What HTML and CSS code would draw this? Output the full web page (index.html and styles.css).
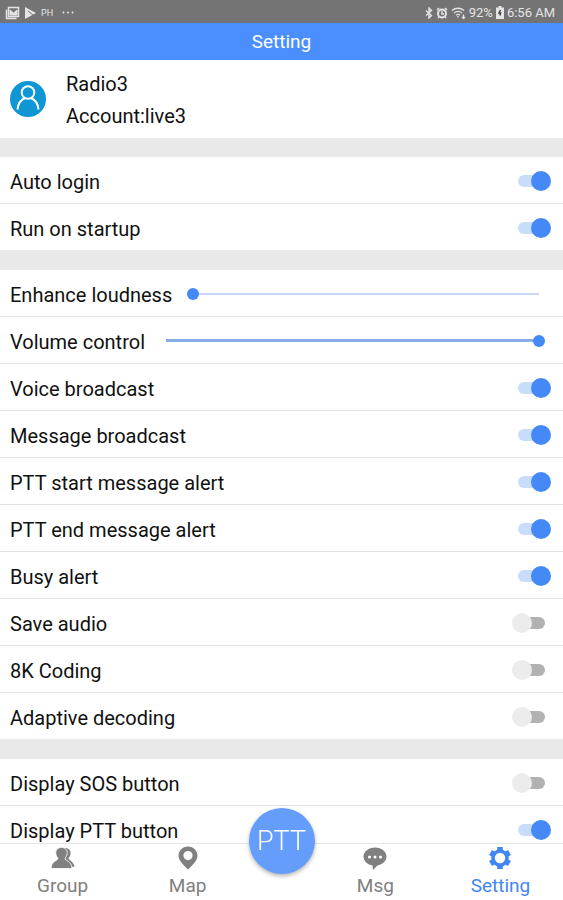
FILE: index.html
```html
<!DOCTYPE html>
<html lang="en">
<head>
    <meta charset="UTF-8">
    <meta name="viewport" content="width=device-width, initial-scale=1.0">
    <title>Setting</title>
    <link rel="stylesheet" href="styles.css">
</head>
<body>
    <div class="status-bar">
        <div class="status-group">
            <svg width="15" height="14" viewBox="0 0 15 14" fill="none" stroke="currentColor">
                <path d="M3.500 1.500h10v9h-10z M1.500 3.500v9h10" stroke-width="1.500"/>
                <path d="M5 9V4l3.500 3L12 4v5z" fill="currentColor"/>
            </svg>
            <svg width="11" height="12" viewBox="0 0 11 12" fill="currentColor">
                <path d="M0 0l11 6-11 6z"/>
                <path d="M3 4l5 4" stroke="#747474"/>
            </svg>
            <span class="status-tag">PH</span>
            <svg class="more" width="12" height="3" viewBox="0 0 12 3" fill="currentColor">
                <circle cx="1.500" cy="1.500" r="1"/><circle cx="6" cy="1.500" r="1"/><circle cx="10.500" cy="1.500" r="1"/>
            </svg>
        </div>
        <div class="status-group status-right">
            <svg width="8" height="12" viewBox="0 0 8 12" fill="none" stroke="currentColor" stroke-width="1.400">
                <path d="M1 3.500l5.500 5L4 11V1l2.500 2.500L1 8.500"/>
            </svg>
            <svg width="12" height="12" viewBox="0 0 12 12" fill="none" stroke="currentColor">
                <circle cx="6" cy="6.500" r="4" stroke-width="2"/>
                <path d="M6 4v3h2M1 3l2-2M11 3L9 1M2 11l1-1M10 11l-1-1" stroke-width="1.500"/>
            </svg>
            <svg width="15" height="12" viewBox="0 0 15 12" fill="none" stroke="currentColor" stroke-width="1.300">
                <path d="M1 3.500c3.500-3 8.500-3 12 0M3 6c2.500-2 5.500-2 8 0M5 8c1.500-1 2.500-1 4 0"/>
                <path d="M7 10.500V9M12.500 7.500v4M11 10l1.500 1.500L14 10"/>
            </svg>
            <span>92%</span>
            <svg width="8" height="13" viewBox="0 0 8 13">
                <path d="M2.500 0h3v1.500H8V13H0V1.500h2.500z" fill="currentColor"/>
                <path d="M4.500 4L3 7h1.500L4 9.500" fill="none" stroke="#444" stroke-width="1.500"/>
            </svg>
            <span>6:56 AM</span>
        </div>
    </div>

    <header>
        <h1>Setting</h1>
    </header>

    <main>
        <section class="profile">
            <svg class="avatar" viewBox="0 0 36 36" fill="none" stroke="#fff" stroke-width="2">
                <circle cx="18" cy="18" r="18" fill="#0f96d4" stroke="none"/>
                <circle cx="18" cy="11.500" r="6.300"/>
                <path d="M7.500 28.500c.5-6.500 3-9.500 7.500-11.500M28.500 28.500c-.5-6.500-3-9.500-7.500-11.500"/>
            </svg>
            <div class="profile-text">
                <div>Radio3</div>
                <div>Account:live3</div>
            </div>
        </section>

        <section class="settings">
            <div class="row">
                <label for="autoLogin">Auto login</label>
                <input type="checkbox" class="switch" id="autoLogin" checked>
            </div>
            <div class="row">
                <label for="startup">Run on startup</label>
                <input type="checkbox" class="switch" id="startup" checked>
            </div>
        </section>

        <section class="settings">
            <div class="row">
                <label for="loudness">Enhance loudness</label>
                <input type="range" class="slider" id="loudness" min="0" max="100" value="0">
            </div>
            <div class="row">
                <label for="volume">Volume control</label>
                <input type="range" class="slider slider-full" id="volume" min="0" max="100" value="100">
            </div>
            <div class="row">
                <label for="voice">Voice broadcast</label>
                <input type="checkbox" class="switch" id="voice" checked>
            </div>
            <div class="row">
                <label for="message">Message broadcast</label>
                <input type="checkbox" class="switch" id="message" checked>
            </div>
            <div class="row">
                <label for="pttStart">PTT start message alert</label>
                <input type="checkbox" class="switch" id="pttStart" checked>
            </div>
            <div class="row">
                <label for="pttEnd">PTT end message alert</label>
                <input type="checkbox" class="switch" id="pttEnd" checked>
            </div>
            <div class="row">
                <label for="busy">Busy alert</label>
                <input type="checkbox" class="switch" id="busy" checked>
            </div>
            <div class="row">
                <label for="saveAudio">Save audio</label>
                <input type="checkbox" class="switch" id="saveAudio">
            </div>
            <div class="row">
                <label for="coding">8K Coding</label>
                <input type="checkbox" class="switch" id="coding">
            </div>
            <div class="row">
                <label for="decoding">Adaptive decoding</label>
                <input type="checkbox" class="switch" id="decoding">
            </div>
        </section>

        <section class="settings">
            <div class="row">
                <label for="sosButton">Display SOS button</label>
                <input type="checkbox" class="switch" id="sosButton">
            </div>
            <div class="row">
                <label for="pttButton">Display PTT button</label>
                <input type="checkbox" class="switch" id="pttButton" checked>
            </div>
        </section>
    </main>

    <nav>
        <a href="#group">
            <svg width="24" height="24" viewBox="0 0 24 24" fill="currentColor">
                <path d="M14 2c4 0 6 2.500 5.500 6-.2 2-1 3-2 4 .5 2.500 5.500 4 6 8.500l-2 .5-5-6-3-3z"/>
                <path d="M10.500 1.500c4 0 6 2.500 5.700 6-.2 2-1 3.500-2.200 4.500.3 3.500 6.500 2.500 7 10.500H0c.5-8 6.700-7 7-10.500-1.200-1-2-2.500-2.200-4.500-.3-3.500 1.700-6 5.700-6z" stroke="#fff" stroke-width=".8"/>
            </svg>
            <span>Group</span>
        </a>
        <a href="#map">
            <svg width="24" height="24" viewBox="0 0 24 24" fill="currentColor" fill-rule="evenodd">
                <path d="M12 .5c-5.300 0-9.500 4-9.500 9 0 5 4.500 9 9.500 14 5-5 9.500-9 9.500-14 0-5-4.200-9-9.500-9zM12 5a4.600 4.600 0 1 1 0 9.200A4.600 4.600 0 0 1 12 5z"/>
            </svg>
            <span>Map</span>
        </a>
        <div class="ptt-slot">
            <button type="button" class="ptt">PTT</button>
        </div>
        <a href="#msg">
            <svg width="24" height="24" viewBox="0 0 24 24">
                <path d="M12 1.500c6.500 0 11.500 4 11.500 9 0 4.500-4 8-9 9L10 24l-.5-4.500c-5-.8-9-4.500-9-9 0-5 5-9 11.500-9z" fill="currentColor"/>
                <g fill="#fff"><circle cx="6.500" cy="11" r="1.500"/><circle cx="12" cy="11" r="1.500"/><circle cx="17.500" cy="11" r="1.500"/></g>
            </svg>
            <span>Msg</span>
        </a>
        <a href="#setting" class="active">
            <svg width="24" height="24" viewBox="0 0 24 24" fill="none" stroke="currentColor">
                <circle cx="12" cy="12" r="7" stroke-width="3.600"/>
                <path d="M12 1v3M12 20v3M2.500 6.500l2.600 1.500M18.900 16l2.600 1.500M2.500 17.500L5.100 16M18.900 8l2.600-1.500" stroke-width="5.600"/>
            </svg>
            <span>Setting</span>
        </a>
    </nav>
</body>
</html>
```

FILE: styles.css
```css
* {
    box-sizing: border-box;
}

body {
    display: flex;
    flex-direction: column;
    height: 100vh;
    margin: 0;
    font-family: Roboto, sans-serif;
    font-size: 20px;
    color: #111;
    background-color: #fff;
}

.status-bar {
    display: flex;
    flex-shrink: 0;
    justify-content: space-between;
    align-items: center;
    height: 23px;
    padding: 2px 8px 0 5px;
    background-color: #747474;
    color: #e4e4e4;
    font-size: 13px;
}

.status-group {
    display: flex;
    align-items: center;
    gap: 5px;
}

.status-right {
    gap: 3px;
}

.status-tag {
    font-size: 9px;
}

.more {
    margin-left: 4px;
}

header {
    flex-shrink: 0;
    padding-top: 1px;
    background-color: #4a8eff;
    color: white;
    text-align: center;
}

h1 {
    margin: 0;
    font-size: 19px;
    font-weight: normal;
    line-height: 36px;
}

main {
    flex: 1;
    min-height: 0;
    overflow-y: auto;
    scrollbar-width: none;
    background-color: #e9e9e9;
}

.profile {
    display: flex;
    align-items: center;
    gap: 20px;
    height: 78px;
    padding: 0 10px;
    background-color: #fff;
}

.avatar {
    width: 36px;
    height: 36px;
}

.profile-text {
    padding-top: 2px;
    line-height: 32px;
}

.settings {
    margin-top: 19px;
    background-color: #fff;
}

.row {
    display: flex;
    align-items: center;
    justify-content: space-between;
    gap: 15px;
    height: 47px;
    padding: 1px 12px 0 10px;
    border-bottom: 1px solid #e2e2e2;
}

.row:last-child {
    border-bottom-color: #e9e9e9;
}

.row label {
    padding-top: 2px;
}

.switch {
    appearance: none;
    position: relative;
    width: 39px;
    height: 20px;
    margin: 0;
    cursor: pointer;
}

.switch::before {
    content: "";
    position: absolute;
    top: 4px;
    left: 6px;
    width: 27px;
    height: 12px;
    border-radius: 6px;
    background-color: #b2b2b2;
}

.switch::after {
    content: "";
    position: absolute;
    top: 0;
    left: 0;
    width: 20px;
    height: 20px;
    border-radius: 50%;
    background-color: #ececec;
}

.switch:checked::before {
    background-color: #c8dcfb;
}

.switch:checked::after {
    left: 19px;
    background-color: #4589f7;
}

.slider {
    appearance: none;
    flex: 1;
    min-width: 0;
    height: 12px;
    margin: 0 6px 0 0;
    background: linear-gradient(#c9d8f5, #c9d8f5) center / calc(100% - 12px) 2px no-repeat;
}

.slider-full {
    background: linear-gradient(#87aeea, #87aeea) center / calc(100% - 12px) 3px no-repeat;
}

.slider::-webkit-slider-thumb {
    appearance: none;
    width: 12px;
    height: 12px;
    border-radius: 50%;
    background-color: #4589f7;
}

nav {
    display: flex;
    flex-shrink: 0;
    height: 57px;
    border-top: 1px solid #e6e6e6;
    background-color: #fff;
}

nav a {
    display: flex;
    flex: 2;
    flex-direction: column;
    align-items: center;
    gap: 4px;
    padding-top: 2px;
    color: #808080;
    font-size: 19px;
    line-height: 24px;
    text-decoration: none;
}

nav a.active {
    color: #4285f4;
}

.ptt-slot {
    position: relative;
    flex: 1;
}

.ptt {
    position: absolute;
    bottom: 26px;
    left: 50%;
    width: 66px;
    height: 66px;
    margin-left: -33px;
    padding: 0;
    border: none;
    border-radius: 50%;
    background-color: #649dfb;
    box-shadow: 0 2px 4px rgba(0, 0, 0, 0.3);
    color: white;
    font-family: Roboto, sans-serif;
    font-size: 27px;
    font-weight: 300;
    cursor: pointer;
}
```
